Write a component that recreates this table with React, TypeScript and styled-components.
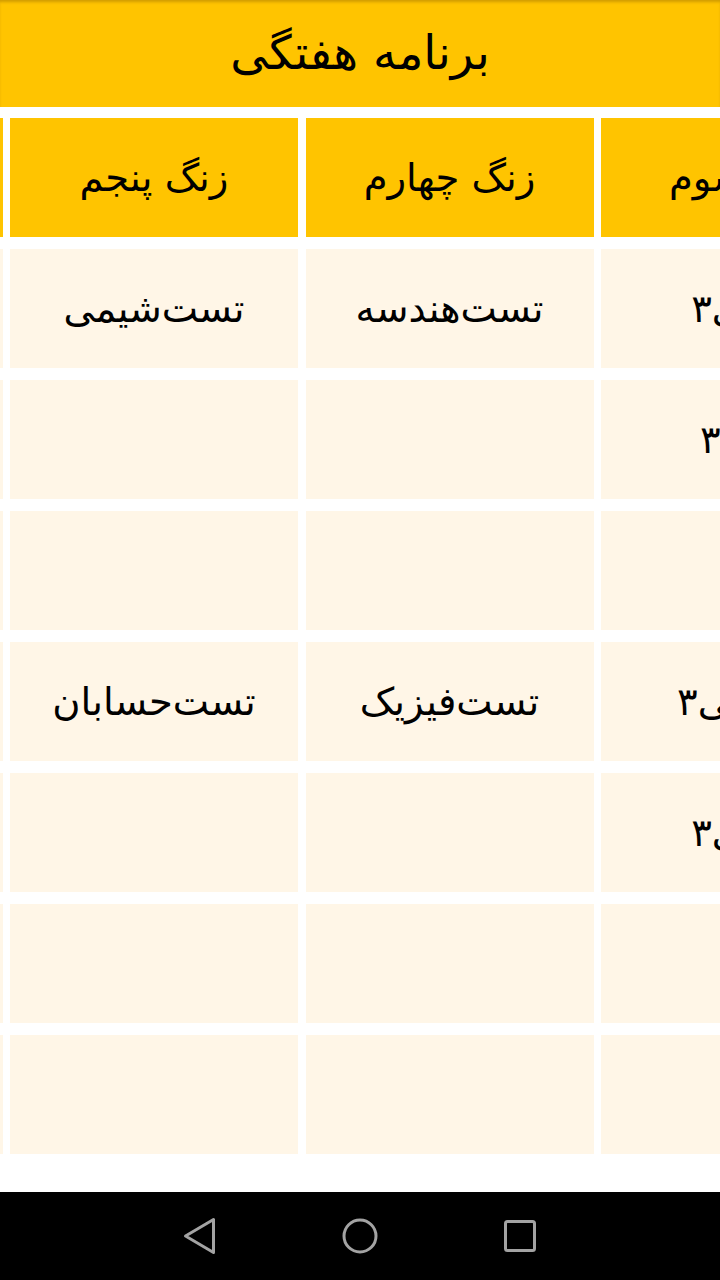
import React from "react";
import styled, { createGlobalStyle } from "styled-components";

const GlobalStyle = createGlobalStyle`
  html, body { margin: 0; padding: 0; background: #ffffff; }
  body { font-family: "DejaVu Sans", "Noto Sans", sans-serif; }
`;

const Screen = styled.div`
  width: 720px;
  height: 1280px;
  display: flex;
  flex-direction: column;
  background: #ffffff;
  overflow: hidden;
`;

const AppBar = styled.header`
  height: 107px;
  flex-shrink: 0;
  background: #ffc400;
  display: flex;
  align-items: center;
  justify-content: center;
  box-shadow: inset 0 3px 3px -1px rgba(120, 80, 0, 0.35);
`;

const Title = styled.h1`
  margin: 0;
  font-family: "DejaVu Sans", sans-serif;
  font-weight: normal;
  font-size: 47px;
  color: #000;
  direction: rtl;
  line-height: 1;
  padding-bottom: 2px;
`;

const Viewport = styled.main`
  flex: 1;
  overflow: hidden;
  direction: rtl;
  padding-top: 11px;
`;

const Table = styled.div<{ $offset: number }>`
  display: grid;
  width: max-content;
  grid-template-columns: repeat(7, 288px);
  column-gap: 7.5px;
  row-gap: 12px;
  grid-auto-rows: 119px;
  margin-right: ${(p) => -p.$offset}px;
`;

const Cell = styled.div<{ $head?: boolean }>`
  background: ${(p) => (p.$head ? "#ffc400" : "#fff6e7")};
  display: flex;
  align-items: center;
  justify-content: center;
  font-family: "DejaVu Sans", sans-serif;
  font-size: 38.5px;
  color: #000;
  white-space: nowrap;
  direction: rtl;
`;

const NavBar = styled.nav`
  height: 88px;
  flex-shrink: 0;
  background: #000;
  display: flex;
  align-items: center;
  justify-content: center;
`;

const NavButton = styled.div`
  width: 160px;
  height: 88px;
  display: flex;
  align-items: center;
  justify-content: center;
`;

const headers = ["روز", "زنگ اول", "زنگ دوم", "زنگ سوم", "زنگ چهارم", "زنگ پنجم", "زنگ ششم"];

const rows: string[][] = [
  ["شنبه", "", "", "عربی۳", "تست‌هندسه", "تست‌شیمی", ""],
  ["یکشنبه", "", "", "زبان۳", "", "", ""],
  ["دوشنبه", "", "", "", "", "", ""],
  ["سه‌شنبه", "", "", "فیزیکی۳", "تست‌فیزیک", "تست‌حسابان", ""],
  ["چهارشنبه", "", "", "عربی۳", "", "", ""],
  ["پنجشنبه", "", "", "", "", "", ""],
  ["جمعه", "", "", "", "", "", ""],
];

export default function App() {
  return (
    <>
      <GlobalStyle />
      <Screen>
        <AppBar>
          <Title>برنامه هفتگی</Title>
        </AppBar>
        <Viewport>
          <Table $offset={1055.5}>
            {headers.map((h) => (
              <Cell $head key={h}>
                {h}
              </Cell>
            ))}
            {rows.map((r, i) =>
              r.map((c, j) => <Cell key={`${i}-${j}`}>{c}</Cell>)
            )}
          </Table>
        </Viewport>
        <NavBar>
          <NavButton>
            <svg width="40" height="40" viewBox="0 0 40 40">
              <path d="M33.5 3.5 L33.5 36.5 L5.5 20 Z" fill="none" stroke="#a3a3a3" strokeWidth="3" strokeLinejoin="round" />
            </svg>
          </NavButton>
          <NavButton>
            <svg width="40" height="40" viewBox="0 0 40 40">
              <circle cx="20" cy="20" r="16" fill="none" stroke="#a3a3a3" strokeWidth="3" />
            </svg>
          </NavButton>
          <NavButton>
            <svg width="40" height="40" viewBox="0 0 40 40">
              <rect x="5.5" y="5.5" width="29" height="29" rx="2" fill="none" stroke="#a3a3a3" strokeWidth="3" />
            </svg>
          </NavButton>
        </NavBar>
      </Screen>
    </>
  );
}
